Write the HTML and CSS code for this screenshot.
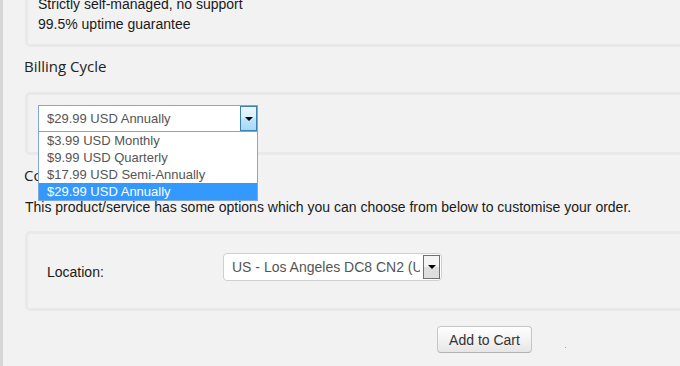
FILE: index.html
```html
<!DOCTYPE html>
<html>
<head>
<meta charset="utf-8">
<link rel="stylesheet" href="styles.css">
</head>
<body>
<div class="frame">
  <div class="content">
    <div class="well well-top">
      <div class="line">Strictly self-managed, no support</div>
      <div class="line">99.5% uptime guarantee</div>
    </div>

    <h3 class="heading heading-billing">Billing Cycle</h3>
    <div class="well well-billing">
      <div class="select-wrap">
        <div class="select select-open">
          <span class="select-text">$29.99 USD Annually</span>
          <span class="arrow arrow-blue"><span class="tri"></span></span>
        </div>
        <ul class="options">
          <li class="option">$3.99 USD Monthly</li>
          <li class="option">$9.99 USD Quarterly</li>
          <li class="option">$17.99 USD Semi-Annually</li>
          <li class="option option-selected">$29.99 USD Annually</li>
        </ul>
      </div>
    </div>

    <h3 class="heading heading-config">Configurable Options</h3>
    <p class="desc">This product/service has some options which you can choose from below to customise your order.</p>
    <div class="well well-config">
      <div class="config-row">
        <label class="config-label">Location:</label>
        <div class="select select-location">
          <span class="select-text select-text-clip">US - Los Angeles DC8 CN2 (USA)</span>
          <span class="arrow arrow-gray"><span class="tri"></span></span>
        </div>
      </div>
    </div>

    <div class="actions">
      <button class="btn">Add to Cart</button><span class="dot"></span>
    </div>
  </div>
</div>
</body>
</html>
```
FILE: styles.css
```css
html, body {
  margin: 0;
  padding: 0;
}
body {
  background: #f2f2f2;
  width: 680px;
  height: 366px;
  overflow: hidden;
  font-family: "Liberation Sans", Arial, sans-serif;
  font-size: 14px;
  color: #222;
}
.frame {
  display: flow-root;
  border-left: 3px solid #d7d7d7;
  padding-left: 22px;
  height: 366px;
}
.content {
  width: 919px;
  margin-top: -20px;
}
.well {
  background: #f2f2f2;
  border: 3px solid #e9e9e9;
  border-radius: 5px;
}
.well-top {
  padding: 11px 10px 10px;
}
.line {
  line-height: 20px;
  color: #1a1a1a;
}
.heading {
  font-family: "Open Sans", "Noto Sans", sans-serif;
  font-weight: normal;
  font-size: 15px;
  line-height: 24px;
  color: #222;
  margin: 0 0 0 -1px;
}
.heading-billing {
  margin-top: 7px;
  margin-bottom: 14px;
}
.heading-config {
  margin-top: 8px;
  margin-bottom: 10px;
}
.well-billing {
  padding: 10px 10px 20px;
}
.select-wrap {
  position: relative;
  width: 220px;
}
.select {
  display: flex;
  align-items: stretch;
  background: #fff;
  box-sizing: border-box;
}
.select-open {
  width: 220px;
  height: 27px;
  border: 1px solid #7ea8dc;
  padding: 0 0 0 8px;
}
.select-text {
  flex: 1;
  line-height: 25px;
  font-size: 13px;
  color: #555;
  white-space: nowrap;
  overflow: hidden;
}
.arrow {
  box-sizing: border-box;
  display: flex;
  align-items: center;
  justify-content: center;
  width: 17px;
}
.arrow-blue {
  border: 1px solid #3c7fb1;
  background: linear-gradient(#eaf6fd, #d9f0fc 45%, #bee6fd 50%, #a7d9f5);
}
.tri {
  width: 0;
  height: 0;
  border-left: 4px solid transparent;
  border-right: 4px solid transparent;
  border-top: 4px solid #000;
}
.options {
  position: absolute;
  top: 27px;
  left: 0;
  width: 220px;
  box-sizing: border-box;
  margin: 0;
  padding: 0;
  list-style: none;
  background: #fff;
  border: 1px solid #7ea8dc;
  border-top: none;
  z-index: 5;
}
.option {
  height: 17px;
  line-height: 17px;
  padding-left: 8px;
  font-size: 13px;
  color: #555;
  white-space: nowrap;
}
.option-selected {
  background: #3399ff;
  color: #fff;
}
.desc {
  margin: 0 0 14px;
  line-height: 20px;
  color: #1a1a1a;
}
.well-config {
  padding: 19px 19px 26px;
}
.config-row {
  display: flex;
  align-items: flex-start;
  height: 29px;
}
.config-label {
  width: 176px;
  padding-top: 9px;
  line-height: 20px;
  color: #1a1a1a;
}
.select-location {
  width: 219px;
  height: 28px;
  border: 1px solid #cfcfcf;
  border-radius: 4px;
  padding: 1px 1px 1px 8px;
}
.select-text-clip {
  font-size: 14px;
  line-height: 24px;
  margin-right: 3px;
}
.arrow-gray {
  border: 1px solid #6f6f6f;
  background: linear-gradient(#f4f4f4 50%, #dedede 50%);
  width: 17px;
}
.actions {
  display: flex;
  justify-content: center;
  align-items: flex-start;
  padding-top: 15px;
}
.btn {
  width: 95px;
  height: 27px;
  font-family: "Liberation Sans", Arial, sans-serif;
  font-size: 14px;
  color: #333;
  background: linear-gradient(#ffffff, #f3f3f3 50%, #e6e6e6);
  border: 1px solid #c6c6c6;
  border-bottom-color: #b3b3b3;
  border-radius: 4px;
  padding: 0;
}
.dot {
  width: 1px;
  height: 1px;
  background: #9aa3ad;
  margin-left: 33px;
  margin-right: -34px;
  margin-top: 21px;
}
```
